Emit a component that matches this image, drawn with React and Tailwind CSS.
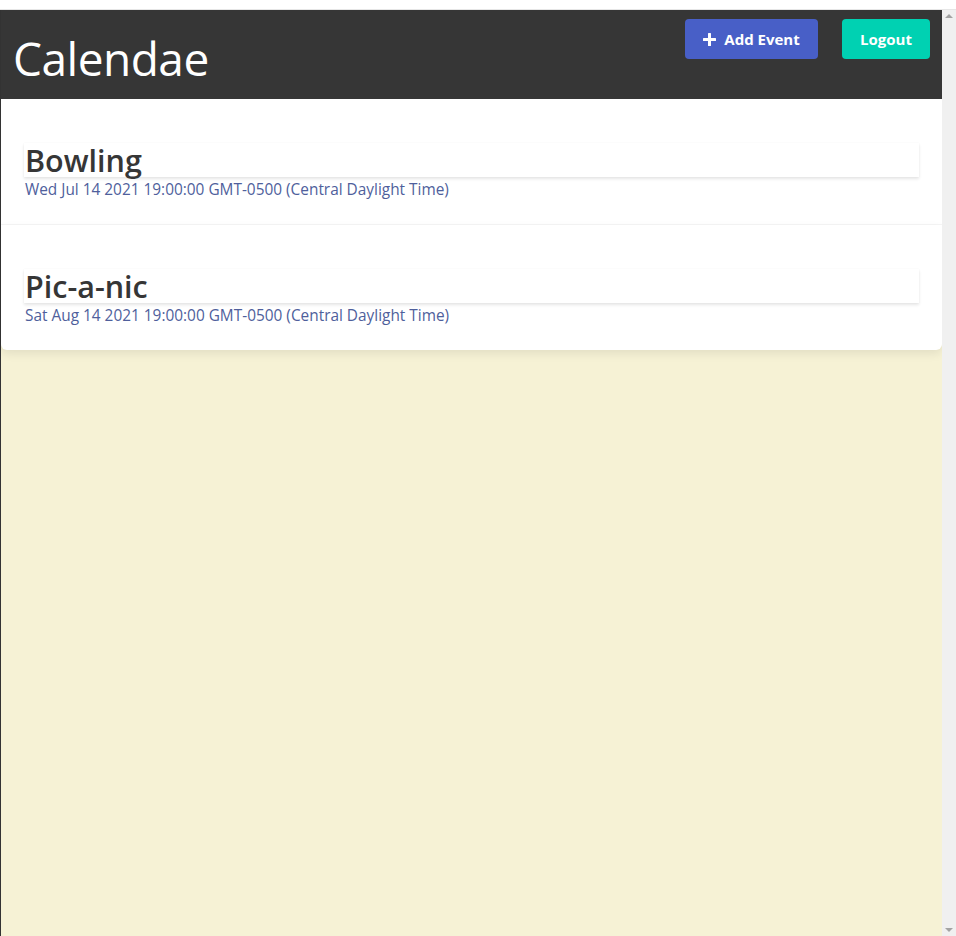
import React from 'react';

const events = [
  { title: 'Bowling', date: 'Wed Jul 14 2021 19:00:00 GMT-0500 (Central Daylight Time)' },
  { title: 'Pic-a-nic', date: 'Sat Aug 14 2021 19:00:00 GMT-0500 (Central Daylight Time)' },
];

function EventCard({ event, last }) {
  return (
    <div className={`bg-white px-[23px] pt-[44px] pb-[24px] ${last ? 'rounded-b-md shadow-[0_4px_10px_rgba(0,0,0,0.08)]' : 'border-b border-[#f5f5f5]'}`}>
      <div className="bg-white shadow-[0_2px_3px_rgba(0,0,0,0.1),0_0_1px_rgba(0,0,0,0.06)] h-[34px] flex items-end">
        <h2 className="text-[30.5px] leading-[40px] font-semibold text-[#363636] pl-[1px] -mb-[3px]">{event.title}</h2>
      </div>
      <p className="text-[15.4px] leading-[20px] text-[#4f5f9c] pl-[1px] mt-[3px]">{event.date}</p>
    </div>
  );
}

export default function App() {
  return (
    <div className="w-[956px] h-[936px] flex flex-col bg-white overflow-hidden" style={{ fontFamily: '"Open Sans", "Noto Sans", sans-serif' }}>
      <div className="h-[10px] bg-white border-b border-[#e6e6e6]" />
      <div className="flex-1 flex">
        <div className="w-[1px] bg-[#333]" />
        <main className="flex-1 bg-[#f6f2d5] flex flex-col">
          <header className="h-[89px] bg-[#363636] flex justify-between items-start pl-[12px] pr-[12px]">
            <h1 className="text-[46px] leading-[58px] text-white tracking-[-0.5px] mt-[19px]">Calendae</h1>
            <div className="flex gap-[24px] mt-[9px]">
              <button className="h-[40px] w-[133px] rounded-[4px] bg-[#485fc7] text-white font-bold text-[15px] flex items-center justify-center gap-[8px]">
                <svg width="13" height="13" viewBox="0 0 13 13" fill="white">
                  <rect x="5" y="0" width="3" height="13" rx="0.5" />
                  <rect x="0" y="5" width="13" height="3" rx="0.5" />
                </svg>
                Add Event
              </button>
              <button className="h-[40px] w-[88px] rounded-[4px] bg-[#00d1b2] text-white font-bold text-[15px]">Logout</button>
            </div>
          </header>
          {events.map((e, i) => (
            <EventCard key={e.title} event={e} last={i === events.length - 1} />
          ))}
        </main>
        <div className="w-[14px] bg-[#f0f0f0] flex flex-col justify-between items-center py-[4px]">
          <div className="w-0 h-0 border-l-[4px] border-r-[4px] border-b-[4px] border-l-transparent border-r-transparent border-b-[#a3a3a3]" />
          <div className="w-0 h-0 border-l-[4px] border-r-[4px] border-t-[4px] border-l-transparent border-r-transparent border-t-[#a3a3a3]" />
        </div>
      </div>
    </div>
  );
}
